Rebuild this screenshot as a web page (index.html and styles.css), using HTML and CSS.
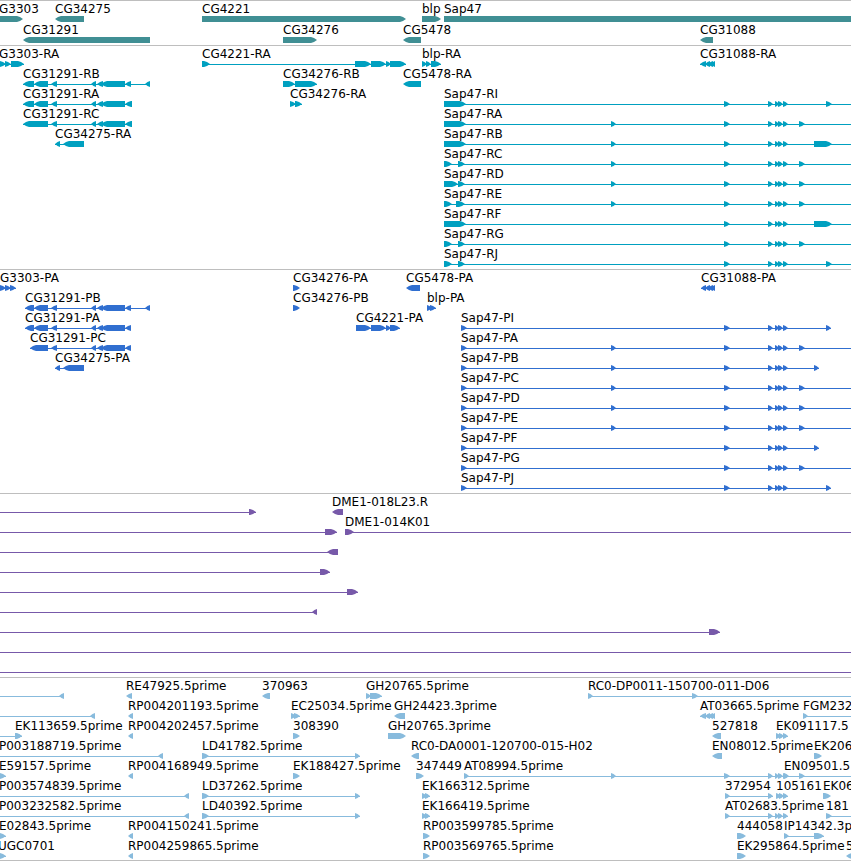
FILE: index.html
```html
<!DOCTYPE html>
<html lang="en">
  <head>
    <meta charset="utf-8">
    <title>Genome Browser</title>
    <link rel="stylesheet" href="styles.css">
  </head>
  <body>
    <main class="browser">
      <section class="track genes" id="genes" aria-label="Genes"></section>
      <section class="track transcripts" id="transcripts" aria-label="Transcripts"></section>
      <section class="track proteins" id="proteins" aria-label="Coding sequences"></section>
      <section class="track clones" id="clones" aria-label="Clones"></section>
      <section class="track ests" id="ests" aria-label="ESTs"></section>
    </main>
    <script src="tracks.js"></script>
  </body>
</html>
```
FILE: styles.css
```css
body {
  margin: 0;
  background: #fff;
  color: #000;
  font-family: "DejaVu Sans", sans-serif;
  font-size: 12px;
  line-height: 14px;
}
.browser {
  overflow: hidden;
}
.track {
  display: flex;
  flex-direction: column;
  padding: 1px 0 2px;
  border-top: 1px solid #bebebe;
}
.track:last-child {
  padding-bottom: 1px;
  border-bottom: 1px solid #bebebe;
}
.genes {
  gap: 1px;
  color: #408f94;
}
.transcripts {
  color: #00a0c0;
}
.proteins {
  color: #306fd0;
}
.clones {
  color: #7759a9;
}
.ests {
  color: #88bbdd;
}
.labels {
  position: relative;
  height: 14px;
  color: #000;
}
.label {
  position: absolute;
  top: 0;
  white-space: nowrap;
}
.glyphs {
  display: block;
  width: 100%;
  height: 6px;
  fill: currentColor;
}
```
FILE: tracks.js
```js
const SVG = "http://www.w3.org/2000/svg";
const OFF_LEFT = -20;
const OFF_RIGHT = 4000;

// feature: [name, start, end, strand, exons]
// strand is 1 or -1, a feature with no exons is one solid arrow
const sapMid = [[724, 730], [768, 773], [775, 779], [778, 783], [783, 788]];
const sapMidLong = [[611, 616], ...sapMid];
const geneMid = [[51, 57], [91, 96], [97, 103], [101, 125]];
const farExon = [799, 805];
const longExon = [814, 832];

function sapR(name, first, mid, last) {
  return [name, 444, OFF_RIGHT, 1, [...first, ...mid, last]];
}

function sapP(name, mid, last, end) {
  return [name, 461, end || OFF_RIGHT, 1, [[461, 467], ...mid, last]];
}

const tracks = {
  genes: [
    [
      ["G3303", -1, 23, 1],
      ["CG34275", 55, 84, -1],
      ["CG4221", 202, 406, 1],
      ["blp", 422, 441, 1],
      ["Sap47", 444, OFF_RIGHT, 1],
    ],
    [
      ["CG31291", 23, 150, -1],
      ["CG34276", 283, 317, 1],
      ["CG5478", 403, 421, -1],
      ["CG31088", 700, 713, -1],
    ],
  ],
  transcripts: [
    [
      ["G3303-RA", -1, 24, 1, [[0, 6], [5, 11], [11, 24]]],
      ["CG4221-RA", 202, 406, 1, [[202, 210], [355, 371], [371, 386], [386, 391], [390, 406]]],
      ["blp-RA", 422, 441, 1, [[422, 427], [426, 431], [431, 441]]],
      ["CG31088-RA", 700, 715, -1, [[700, 706], [705, 710], [708, 713], [711, 715]]],
    ],
    [
      ["CG31291-RB", 23, 150, -1, [[23, 34], [34, 48], ...geneMid, [125, 131], [145, 150]]],
      ["CG34276-RB", 283, 317, 1, [[283, 295], [295, 317]]],
      ["CG5478-RA", 403, 421, -1],
    ],
    [
      ["CG31291-RA", 23, 132, -1, [[23, 34], [34, 48], ...geneMid, [125, 132]]],
      ["CG34276-RA", 290, 302, 1, [[290, 296], [295, 302]]],
      sapR("Sap47-RI", [[444, 466]], sapMid, [826, 832]),
    ],
    [
      ["CG31291-RC", 23, 132, -1, [[23, 48], ...geneMid, [125, 132]]],
      sapR("Sap47-RA", [[444, 466]], sapMidLong, farExon),
    ],
    [
      ["CG34275-RA", 55, 84, -1, [[55, 60], [63, 84]]],
      sapR("Sap47-RB", [[444, 466]], sapMidLong, longExon),
    ],
    [sapR("Sap47-RC", [[444, 452], [458, 465]], sapMidLong, farExon)],
    [sapR("Sap47-RD", [[444, 458], [458, 465]], sapMidLong, farExon)],
    [sapR("Sap47-RE", [[444, 452], [456, 465]], sapMidLong, farExon)],
    [sapR("Sap47-RF", [[444, 466]], sapMid, longExon)],
    [sapR("Sap47-RG", [[444, 452], [458, 465]], sapMid, farExon)],
    [sapR("Sap47-RJ", [[444, 452], [458, 465]], sapMid, [826, 832])],
  ],
  proteins: [
    [
      ["G3303-PA", 0, 16, 1, [[0, 6], [5, 11], [10, 16]]],
      ["CG34276-PA", 293, 300, 1],
      ["CG5478-PA", 406, 420, -1],
      ["CG31088-PA", 701, 715, -1, [[701, 706], [705, 710], [708, 713], [711, 715]]],
    ],
    [
      ["CG31291-PB", 25, 150, -1, [[25, 34], [34, 48], ...geneMid, [125, 131], [145, 150]]],
      ["CG34276-PB", 293, 300, 1],
      ["blp-PA", 427, 436, 1, [[427, 432], [430, 436]]],
    ],
    [
      ["CG31291-PA", 25, 131, -1, [[25, 34], [34, 48], ...geneMid, [125, 131]]],
      ["CG4221-PA", 356, 400, 1, [[356, 371], [371, 386], [386, 391], [390, 400]]],
      sapP("Sap47-PI", sapMid, [826, 831], 831),
    ],
    [
      ["CG31291-PC", 30, 131, -1, [[30, 48], ...geneMid, [125, 131]]],
      sapP("Sap47-PA", sapMidLong, farExon),
    ],
    [
      ["CG34275-PA", 55, 84, -1, [[55, 60], [63, 84]]],
      sapP("Sap47-PB", sapMidLong, [814, 819], 819),
    ],
    [sapP("Sap47-PC", sapMidLong, farExon)],
    [sapP("Sap47-PD", sapMidLong, farExon)],
    [sapP("Sap47-PE", sapMidLong, farExon)],
    [sapP("Sap47-PF", sapMid, [814, 819], 819)],
    [sapP("Sap47-PG", sapMid, farExon)],
    [sapP("Sap47-PJ", sapMid, [826, 831], 831)],
  ],
  clones: [
    [
      ["", OFF_LEFT, 256, 1, [[249, 256]]],
      ["DME1-018L23.R", 332, 343, -1],
    ],
    [
      ["", OFF_LEFT, 337, 1, [[325, 337]]],
      ["DME1-014K01", 345, OFF_RIGHT, 1, [[345, 354]]],
    ],
    [["", OFF_LEFT, 338, -1, [[327, 338]]]],
    [["", OFF_LEFT, 330, 1, [[320, 330]]]],
    [["", OFF_LEFT, 358, 1, [[347, 358]]]],
    [["", OFF_LEFT, 317, -1, [[312, 317]]]],
    [["", OFF_LEFT, 720, 1, [[709, 720]]]],
    [["", OFF_LEFT, OFF_RIGHT, 1, []]],
    [["", OFF_LEFT, OFF_RIGHT, 1, []]],
  ],
  ests: [
    [
      ["", OFF_LEFT, 64, -1, [[59, 64]]],
      ["RE47925.5prime", 126, 132, -1],
      ["370963", 262, 270, -1],
      ["GH20765.5prime", 366, 382, 1, [[366, 371], [370, 382]]],
      ["RC0-DP0011-150700-011-D06", 588, OFF_RIGHT, 1, [[588, 593], [692, 698]]],
    ],
    [
      ["", OFF_LEFT, 95, -1, [[90, 95]]],
      ["RP004201193.5prime", 128, 133, -1],
      ["EC25034.5prime", 291, 300, 1, [[291, 296], [294, 300]]],
      ["GH24423.3prime", 394, 405, -1],
      ["AT03665.5prime", 700, 715, -1, [[700, 706], [705, 710], [708, 713], [711, 715]]],
      ["FGM232", 803, OFF_RIGHT, 1, [[803, 808]]],
    ],
    [
      ["", OFF_LEFT, 22, 1, [[15, 22]]],
      ["EK113659.5prime", 15, 22, 1],
      ["RP004202457.5prime", 128, 133, -1],
      ["308390", 293, 300, 1],
      ["GH20765.3prime", 388, 406, 1],
      ["527818", 712, 721, -1],
      ["EK091117.5", 776, 788, 1, [[776, 781], [779, 784], [783, 788]]],
    ],
    [
      ["P003188719.5prime", -1, 163, -1, [[158, 163]]],
      ["LD41782.5prime", 202, 360, 1, [[202, 209], [355, 360]]],
      ["RC0-DA0001-120700-015-H02", 411, 419, -1],
      ["EN08012.5prime", 712, 722, -1],
      ["EK206", 814, 822, 1],
    ],
    [
      ["E59157.5prime", -1, 6, 1, [[0, 6]]],
      ["RP004168949.5prime", 128, 133, -1],
      ["EK188427.5prime", 293, 300, 1],
      ["347449", 416, 424, 1],
      ["AT08994.5prime", 464, OFF_RIGHT, 1, [[464, 469], ...sapMidLong, farExon]],
      ["EN09501.5", 784, 789, 1],
    ],
    [
      ["P003574839.5prime", -1, 189, -1, [[184, 189]]],
      ["LD37262.5prime", 202, 360, 1, [[202, 209], [355, 360]]],
      ["EK166312.5prime", 422, 430, 1, [[422, 427], [425, 430]]],
      ["372954", 725, 773, 1, [[725, 730], [768, 773]]],
      ["105161", 776, 788, 1, [[776, 781], [779, 784], [783, 788]]],
      ["EK06", 823, 831, 1],
    ],
    [
      ["P003232582.5prime", -1, 189, -1, [[184, 189]]],
      ["LD40392.5prime", 202, 360, 1, [[202, 209], [355, 360]]],
      ["EK166419.5prime", 422, 430, 1, [[422, 427], [425, 430]]],
      ["AT02683.5prime", 725, 788, 1, [[725, 730], [768, 773], [775, 779], [778, 783], [783, 788]]],
      ["181", 826, OFF_RIGHT, 1, [[826, 832]]],
    ],
    [
      ["E02843.5prime", -1, 6, 1, [[0, 6]]],
      ["RP004150241.5prime", 128, 133, -1],
      ["RP003599785.5prime", 423, 430, 1],
      ["444058", 737, 746, 1],
      ["IP14342.3p", 784, 824, 1, [[784, 789], [814, 824]]],
    ],
    [
      ["UGC0701", -2, 6, 1, [[0, 6]]],
      ["RP004259865.5prime", 128, 133, -1],
      ["RP003569765.5prime", 423, 430, 1],
      ["EK295864.5prime", 737, 746, 1],
      ["5", 846, 856, -1],
    ],
  ],
};

function addArrow(svg, start, end, strand) {
  const head = Math.min(end - start, 6);
  const tail = strand > 0 ? start : end;
  const tip = strand > 0 ? end : start;
  const neck = tip - strand * head;
  const shoulder = tip - strand * head / 2;
  const arrow = document.createElementNS(SVG, "polygon");
  arrow.setAttribute(
    "points",
    `${tail},0 ${neck},0 ${shoulder},1 ${tip},3 ${shoulder},5 ${neck},6 ${tail},6`
  );
  svg.appendChild(arrow);
}

function addLine(svg, start, end) {
  const line = document.createElementNS(SVG, "rect");
  line.setAttribute("x", start);
  line.setAttribute("y", 3);
  line.setAttribute("width", end - start);
  line.setAttribute("height", 1);
  svg.appendChild(line);
}

function buildRow(features) {
  const row = document.createElement("div");
  const labels = document.createElement("div");
  const svg = document.createElementNS(SVG, "svg");
  row.className = "row";
  labels.className = "labels";
  svg.setAttribute("class", "glyphs");
  svg.setAttribute("aria-hidden", "true");

  features.forEach(function ([name, start, end, strand, exons]) {
    if (name) {
      const label = document.createElement("span");
      label.className = "label";
      label.textContent = name;
      label.style.left = start + "px";
      labels.appendChild(label);
    }
    if (exons) {
      addLine(svg, start, end);
      exons.forEach(([from, to]) => addArrow(svg, from, to, strand));
    } else {
      addArrow(svg, start, end, strand);
    }
  });

  row.append(labels, svg);
  return row;
}

Object.keys(tracks).forEach(function (id) {
  const track = document.getElementById(id);
  tracks[id].forEach((features) => track.appendChild(buildRow(features)));
});
```
